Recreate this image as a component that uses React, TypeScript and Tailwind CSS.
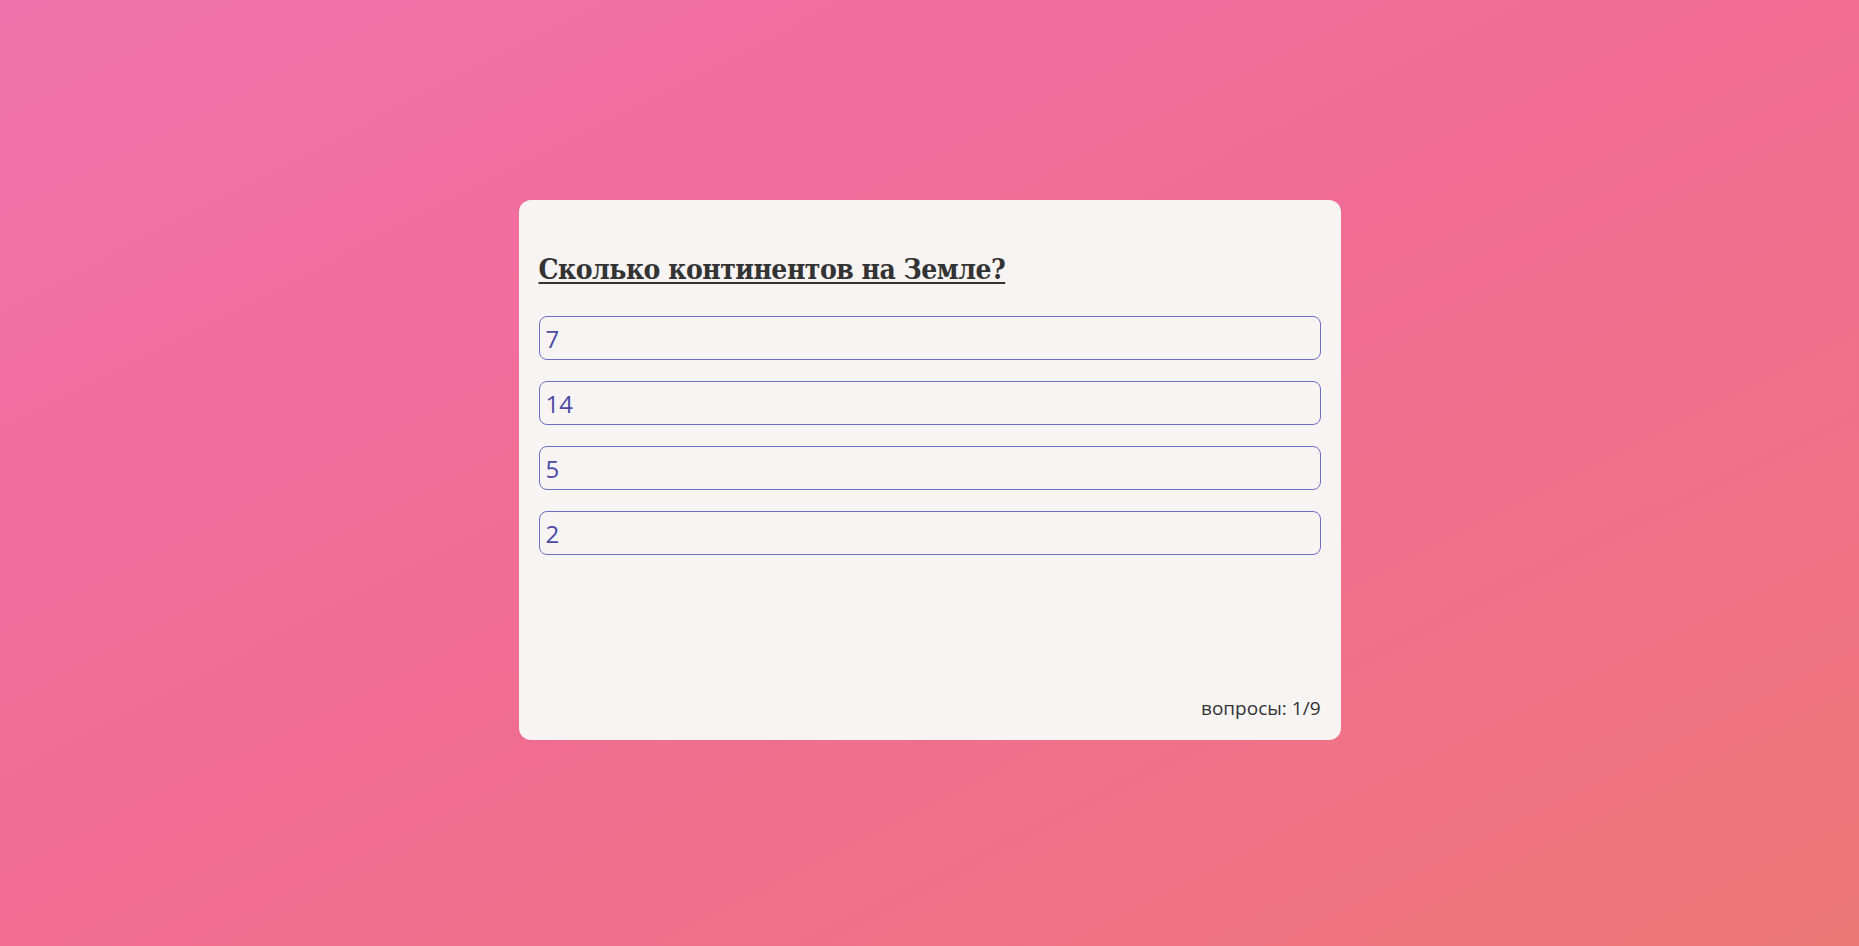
const ANSWERS = ['7', '14', '5', '2'];

export default function App() {
    return (
        <div className="min-h-screen w-full flex items-center justify-center bg-gradient-to-br from-[#f172aa] via-[#f06c93] to-[#ee7777]">
            <div className="w-[822px] h-[540px] mb-[6px] rounded-xl bg-[#f8f4f3] px-5 flex flex-col">
                <h1 className="mt-[53px] text-[28px] leading-[34px] font-bold underline decoration-2 underline-offset-[3px] tracking-[-0.5px] text-[#333] [font-family:'DejaVu_Serif_Condensed','DejaVu_Serif',serif] [font-stretch:condensed]">
                    Сколько континентов на Земле?
                </h1>
                <div className="mt-[29px] flex flex-col gap-[21px]">
                    {ANSWERS.map(a => (
                        <button
                            key={a}
                            className="h-[44px] w-full rounded-lg border border-[#6e6ec6] text-left px-[6px] pt-[2px] text-[24px] text-[#4b4ba6] [font-family:'Open_Sans',sans-serif]"
                        >
                            {a}
                        </button>
                    ))}
                </div>
                <div className="mt-auto pb-[18px] text-right text-[19px] text-[#333] [font-family:'Open_Sans',sans-serif]">
                    вопросы: 1/9
                </div>
            </div>
        </div>
    );
}
